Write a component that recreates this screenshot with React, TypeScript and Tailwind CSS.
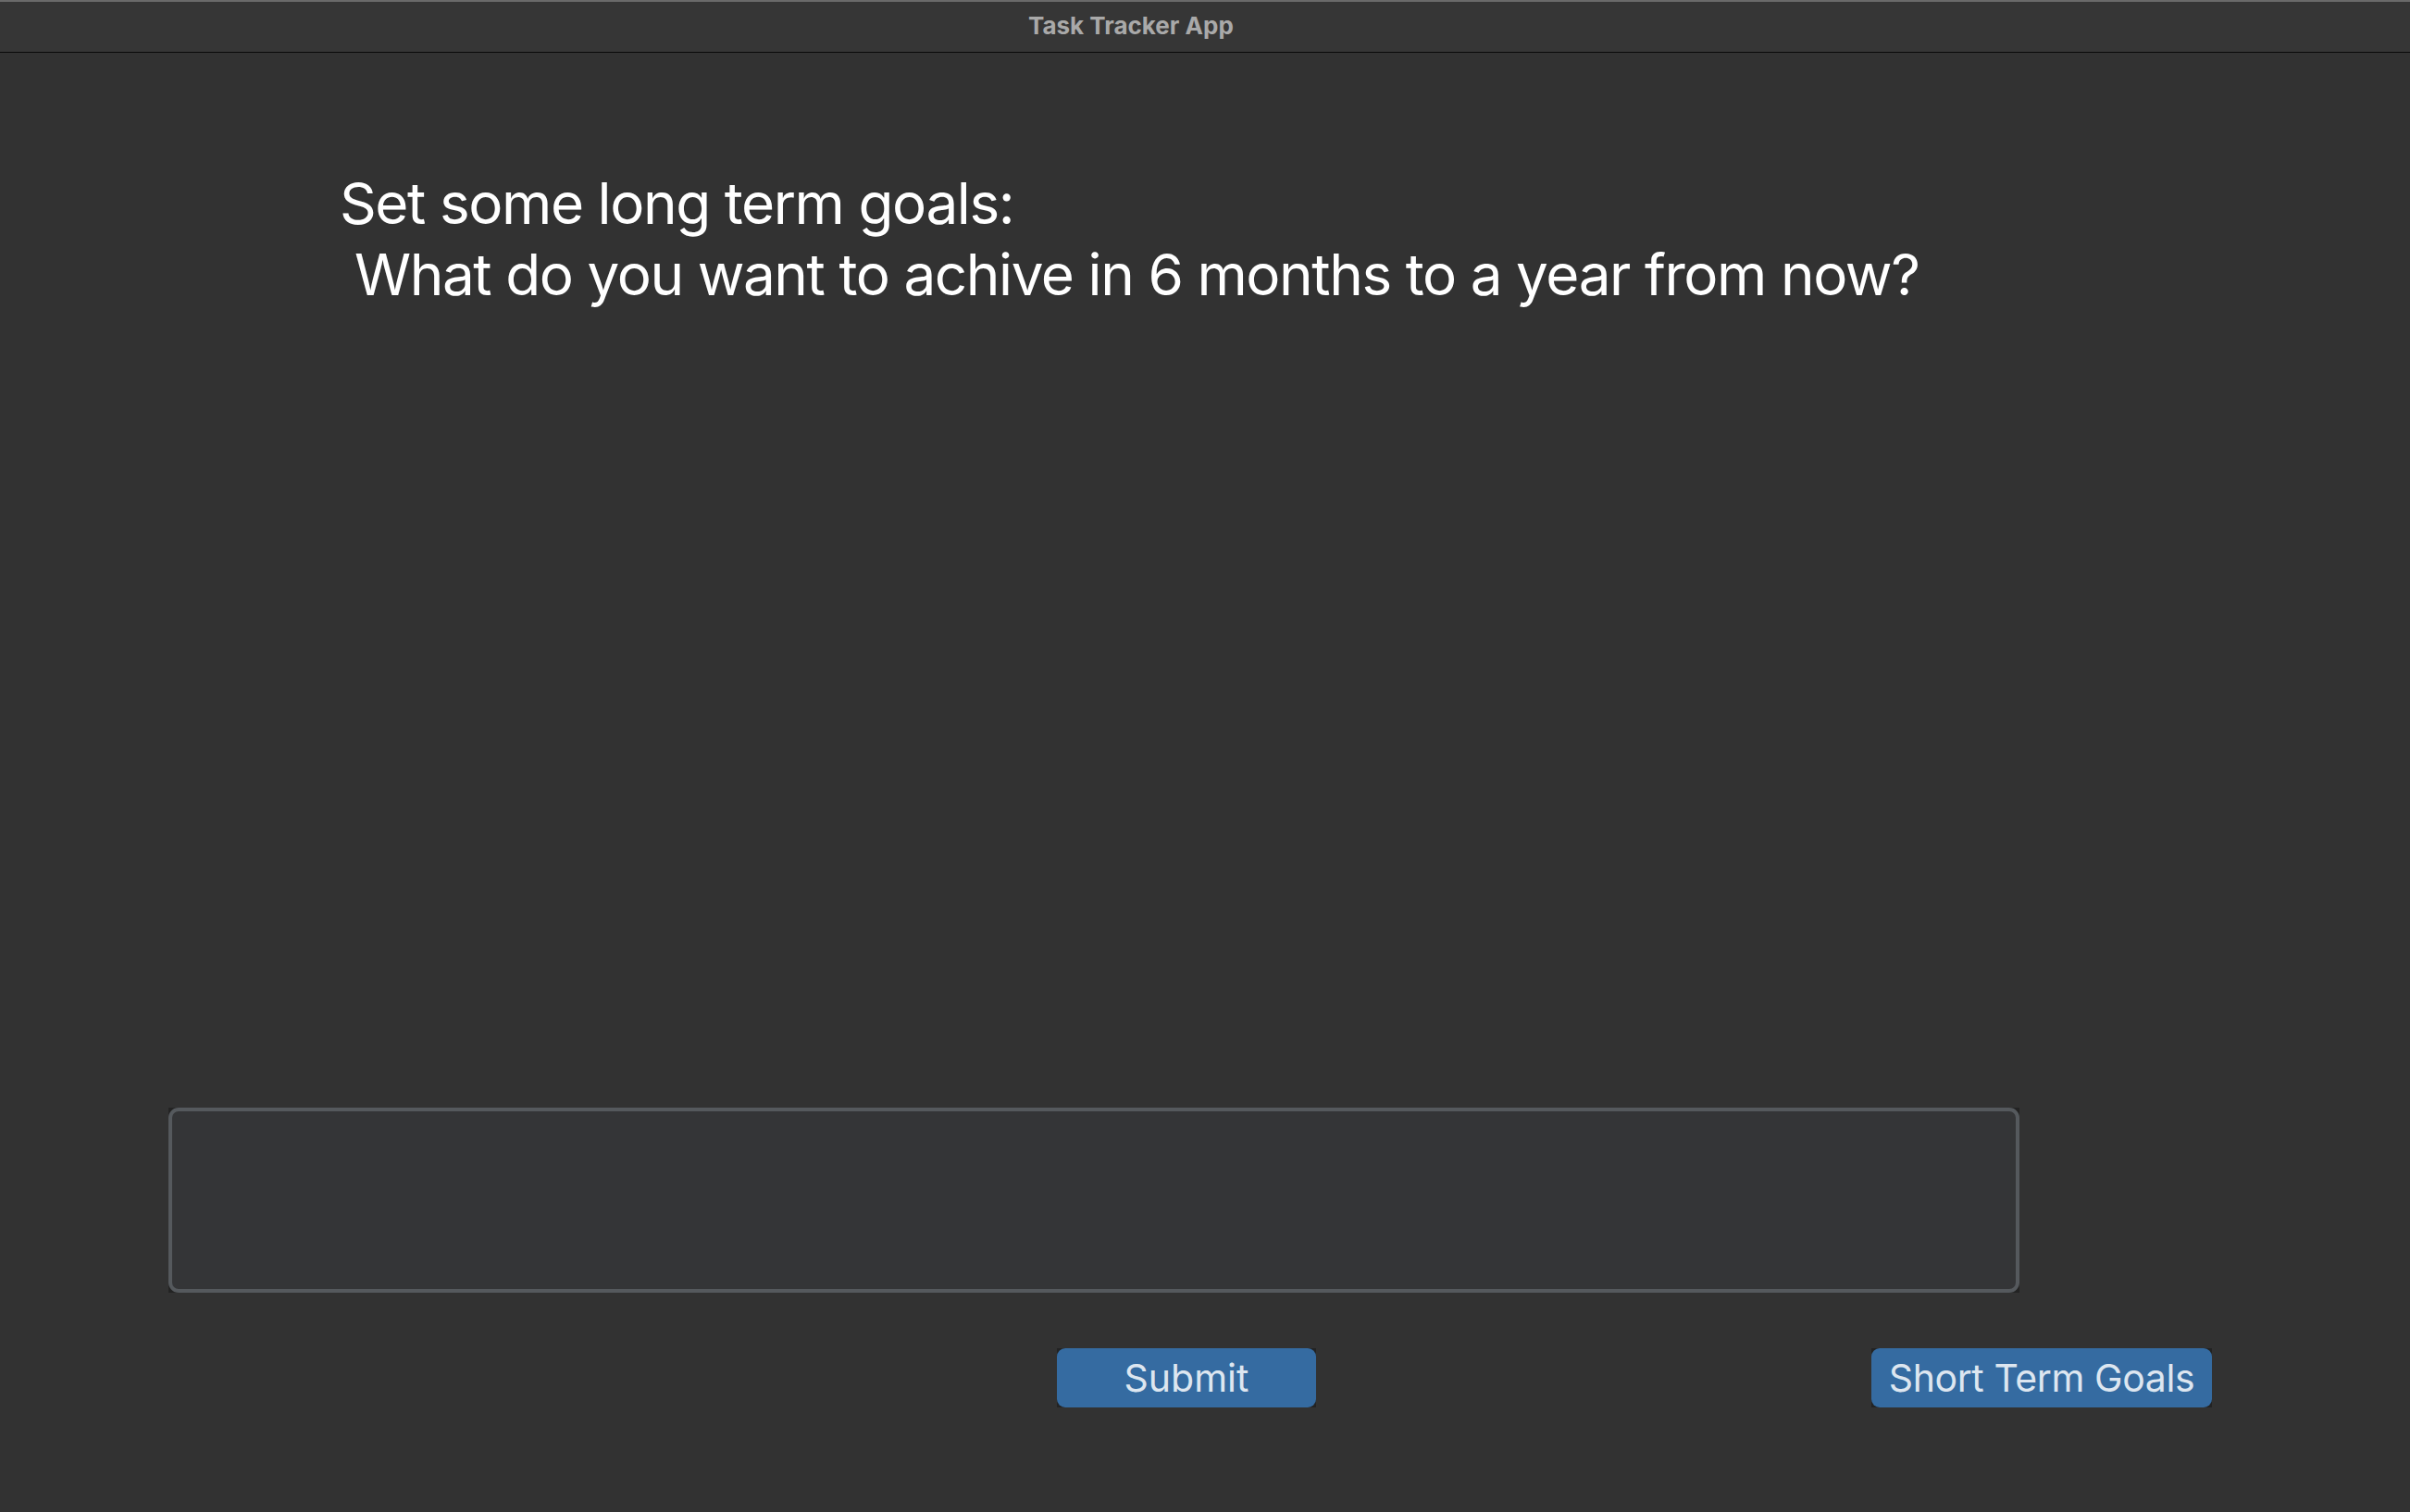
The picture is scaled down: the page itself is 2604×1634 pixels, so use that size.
import React from "react";

export default function App() {
  return (
    <div
      className="w-[2604px] h-[1634px] bg-[#323232] flex flex-col overflow-hidden"
      style={{ fontFamily: 'Inter, "Noto Sans", sans-serif' }}
    >
      <div className="h-[57px] shrink-0 bg-[#363636] border-t-2 border-t-[#6a6a6a] border-b border-b-[#0a0a0a] flex items-center pl-[1111px]">
        <span className="text-[26px] font-bold text-[#a9a9a9] leading-none mt-[-2px]">Task Tracker App</span>
      </div>

      <div className="pl-[367px] mt-[124px]">
        <h1 className="text-[62px] leading-[77px] tracking-[-0.023em] text-white font-normal whitespace-pre">
          {"Set some long term goals:\n What do you want to achive in 6 months to a year from now?"}
        </h1>
      </div>

      <div className="ml-[182px] mt-[862px] w-[2000px] h-[200px] bg-[#232323]">
        <div className="w-full h-full rounded-[11px] border-[4px] border-[#55595d] bg-[#343537]" />
      </div>

      <div className="flex mt-[60px] pl-[1142px]">
        <div className="w-[280px] h-[64px] bg-[#232323]">
          <button className="w-full h-full rounded-[9px] bg-[#356ba1] text-[#dde6f0] text-[41px] leading-none flex items-center justify-center">
            Submit
          </button>
        </div>
        <div className="ml-[600px] w-[368px] h-[64px] bg-[#232323]">
          <button className="w-full h-full rounded-[9px] bg-[#356ba1] text-[#dde6f0] text-[41px] tracking-[-0.01em] leading-none flex items-center justify-center">
            Short Term Goals
          </button>
        </div>
      </div>
    </div>
  );
}
